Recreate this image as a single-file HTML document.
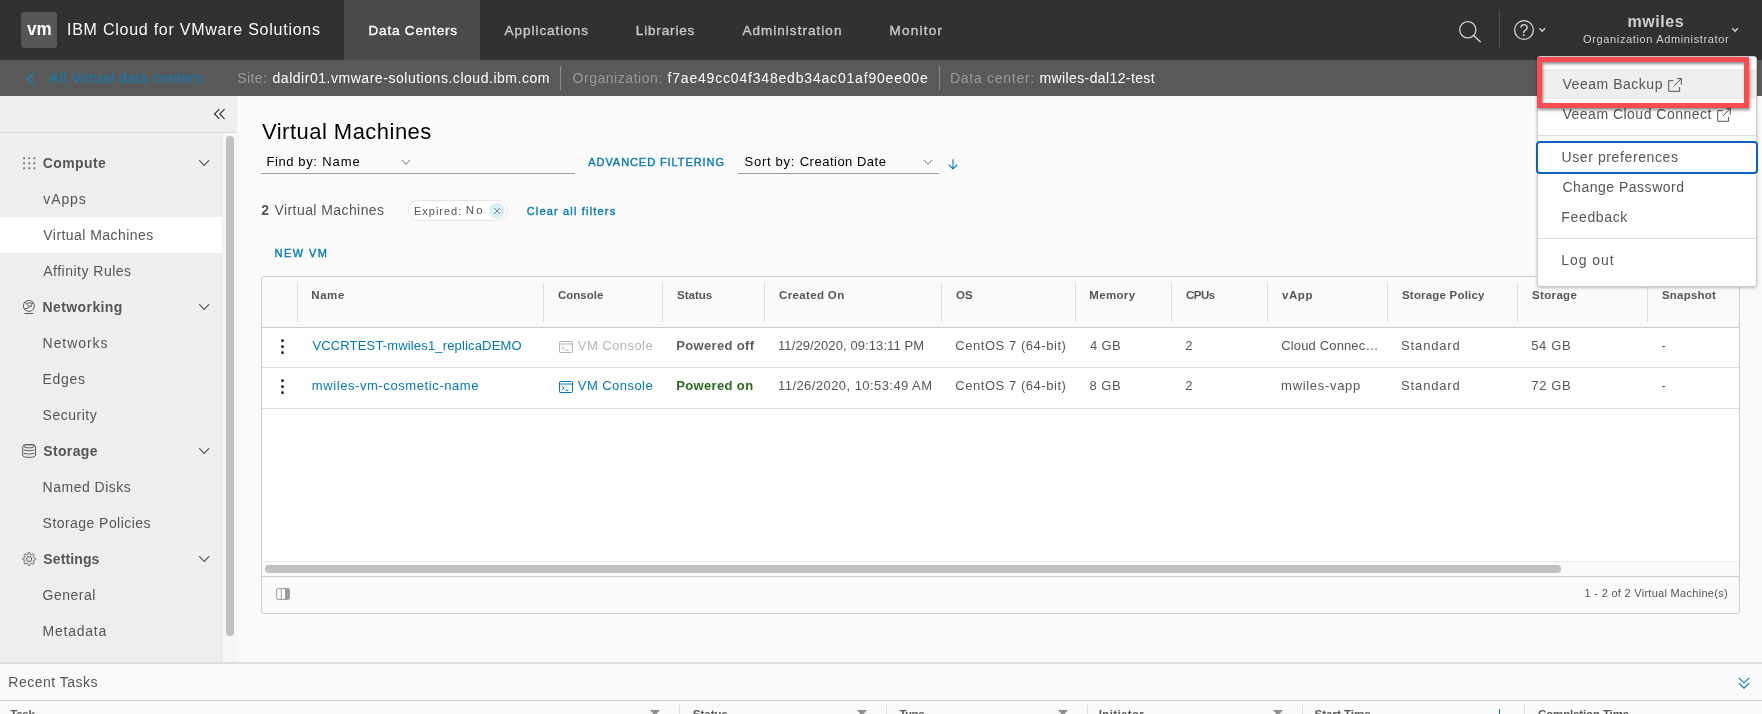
<!DOCTYPE html>
<html lang="en"><head><meta charset="utf-8"><title>IBM Cloud for VMware Solutions - Virtual Machines</title>
<style>
*{box-sizing:border-box;margin:0;padding:0}
html,body{width:1762px;height:714px;overflow:hidden;background:#fafafa;font-family:"Liberation Sans",Arial,sans-serif;}
.abs,.t{position:absolute}
.t{white-space:nowrap;line-height:normal}
.m{-webkit-text-stroke:0.35px currentColor}
svg{position:absolute;overflow:visible}
#hdr{left:0;top:0;width:1762px;height:60px;background:#313131}
#sub{left:0;top:60px;width:1762px;height:36px;background:#595959}
#side{left:0;top:96px;width:223px;height:567px;background:#eeeeee}
#grid{left:261px;top:276px;width:1479px;height:338px;border:1px solid #cccccc;border-radius:3px;background:#fff;overflow:hidden}
#menu{left:1537px;top:56px;width:220px;height:231px;background:#fff;border:1px solid #cccccc;border-radius:3px;box-shadow:0 1px 3px rgba(0,0,0,.25)}
#tasks{left:0;top:662px;width:1762px;height:52px;background:#fafafa;border-top:2px solid #dddddd}
#app{position:absolute;left:0;top:0;width:1762px;height:714px;will-change:transform}
</style></head><body><div id="app">
<div id="hdr" class="abs">
<div class="abs" style="left:21px;top:12px;width:36px;height:36px;border-radius:3px;background:#565656"></div>
<span class="t" id="t0" style="left:26.50px;top:17.91px;font-size:19px;color:#ffffff;font-weight:700;transform:scaleX(0.9);transform-origin:0 0;">vm</span>
<span class="t" id="t1" style="left:67.00px;top:20.52px;font-size:16px;color:#fafafa;letter-spacing:0.752px;">IBM Cloud for VMware Solutions</span>
<div class="abs" style="left:344px;top:0;width:136px;height:60px;background:#4b4b4b"></div>
<span class="t m" id="t2" style="left:368.50px;top:22.68px;font-size:13.5px;color:#ffffff;letter-spacing:0.818px;">Data Centers</span>
<span class="t m" id="t3" style="left:504.50px;top:22.68px;font-size:13.5px;color:#c9c9c9;letter-spacing:0.973px;">Applications</span>
<span class="t m" id="t4" style="left:635.80px;top:22.68px;font-size:13.5px;color:#c9c9c9;letter-spacing:0.850px;">Libraries</span>
<span class="t m" id="t5" style="left:742.40px;top:22.68px;font-size:13.5px;color:#c9c9c9;letter-spacing:1.036px;">Administration</span>
<span class="t m" id="t6" style="left:889.50px;top:22.68px;font-size:13.5px;color:#c9c9c9;letter-spacing:1.228px;">Monitor</span>
<svg style="left:1457px;top:18px" width="26" height="26" viewBox="0 0 26 26"><circle cx="10.800" cy="11.700" r="8.100" fill="none" stroke="#d4d4d4" stroke-width="1.300"/><path d="M16.800 17.700 L23.300 23.700" stroke="#d4d4d4" stroke-width="1.400" stroke-linecap="round"/></svg>
<div class="abs" style="left:1499px;top:10px;width:1px;height:38px;background:#4f4f4f"></div>
<svg style="left:1513px;top:20px" width="36" height="20" viewBox="0 0 36 20"><circle cx="11" cy="10" r="9.400" fill="none" stroke="#d4d4d4" stroke-width="1.300"/><path d="M26.400 8.300 L29.200 11.300 L32 8.300" fill="none" stroke="#d4d4d4" stroke-width="1.300"/></svg>
<span class="t" id="t7" style="left:1519.60px;top:21.52px;font-size:16px;color:#d4d4d4;">?</span>
<span class="t" id="t8" style="left:1627.40px;top:12.52px;font-size:16px;color:#d0d0d0;font-weight:700;letter-spacing:0.580px;">mwiles</span>
<span class="t" id="t9" style="left:1583.00px;top:33.05px;font-size:11px;color:#d0d0d0;letter-spacing:0.644px;">Organization Administrator</span>
<svg style="left:1730px;top:25px" width="10" height="10" viewBox="0 0 10 10"><path d="M2.300 3.300 L5.100 6.300 L7.900 3.300" fill="none" stroke="#d4d4d4" stroke-width="1.300"/></svg>
</div>
<div id="sub" class="abs"></div>
<svg style="left:25.300px;top:71.700px" width="10" height="14" viewBox="0 0 10 14"><path d="M8 1.5 L2.5 7 L8 12.5" fill="none" stroke="#0b86cc" stroke-width="1.6"/></svg>
<span class="t" id="t10" style="left:49.30px;top:70.33px;font-size:14px;color:#0c7cba;letter-spacing:0.562px;">All Virtual data centers</span>
<span class="t" id="t11" style="left:237.14px;top:70.33px;font-size:14px;color:#9a9a9a;letter-spacing:0.464px;">Site:</span>
<span class="t" id="t12" style="left:272.50px;top:70.33px;font-size:14px;color:#ffffff;letter-spacing:0.532px;">daldir01.vmware-solutions.cloud.ibm.com</span>
<div class="abs" style="left:560px;top:66px;width:1px;height:24px;background:#8c8c8c"></div>
<span class="t" id="t13" style="left:572.50px;top:70.33px;font-size:14px;color:#9a9a9a;letter-spacing:0.542px;">Organization:</span>
<span class="t" id="t14" style="left:667.50px;top:70.33px;font-size:14px;color:#ffffff;letter-spacing:0.811px;">f7ae49cc04f348edb34ac01af90ee00e</span>
<div class="abs" style="left:939px;top:66px;width:1px;height:24px;background:#8c8c8c"></div>
<span class="t" id="t15" style="left:950.00px;top:70.33px;font-size:14px;color:#9a9a9a;letter-spacing:0.727px;">Data center:</span>
<span class="t" id="t16" style="left:1039.50px;top:70.33px;font-size:14px;color:#ffffff;letter-spacing:0.389px;">mwiles-dal12-test</span>
<div id="side" class="abs"></div>
<div class="abs" style="left:222px;top:96px;width:15px;height:37px;background:#eeeeee"></div>
<div class="abs" style="left:222.800px;top:133px;width:14.200px;height:530px;background:#f7f7f7"></div>
<div class="abs" style="left:0;top:132px;width:237px;height:1px;background:#d8d8d8"></div>
<div class="abs" style="left:226.200px;top:135.800px;width:7.600px;height:500.600px;border-radius:4px;background:#c1c1c1"></div>
<svg style="left:213px;top:108px" width="14" height="12" viewBox="0 0 14 12"><path d="M6.400 1.100 L1.500 6 L6.400 10.900 M11.600 1.100 L6.700 6 L11.600 10.900" fill="none" stroke="#2e2e2e" stroke-width="1.1"/></svg>
<div class="abs" style="left:0;top:217px;width:222px;height:36px;background:#ffffff"></div>
<span class="t" id="t17" style="left:42.71px;top:155.33px;font-size:14px;color:#565656;font-weight:700;letter-spacing:0.399px;">Compute</span>
<svg style="left:198px;top:159px" width="12" height="8" viewBox="0 0 12 8"><path d="M1.200 1.200 L6.200 6.300 L11.200 1.200" fill="none" stroke="#565656" stroke-width="1.2"/></svg>
<span class="t" id="t18" style="left:43.30px;top:191.33px;font-size:14px;color:#565656;letter-spacing:0.900px;">vApps</span>
<span class="t" id="t19" style="left:43.30px;top:227.33px;font-size:14px;color:#565656;letter-spacing:0.453px;">Virtual Machines</span>
<span class="t" id="t20" style="left:43.30px;top:263.33px;font-size:14px;color:#565656;letter-spacing:0.483px;">Affinity Rules</span>
<span class="t" id="t21" style="left:42.60px;top:299.33px;font-size:14px;color:#565656;font-weight:700;letter-spacing:0.389px;">Networking</span>
<svg style="left:198px;top:303px" width="12" height="8" viewBox="0 0 12 8"><path d="M1.200 1.200 L6.200 6.300 L11.200 1.200" fill="none" stroke="#565656" stroke-width="1.2"/></svg>
<span class="t" id="t22" style="left:42.60px;top:335.33px;font-size:14px;color:#565656;letter-spacing:0.940px;">Networks</span>
<span class="t" id="t23" style="left:42.60px;top:371.33px;font-size:14px;color:#565656;letter-spacing:0.657px;">Edges</span>
<span class="t" id="t24" style="left:42.61px;top:407.33px;font-size:14px;color:#565656;letter-spacing:0.499px;">Security</span>
<span class="t" id="t25" style="left:43.30px;top:443.33px;font-size:14px;color:#565656;font-weight:700;letter-spacing:0.338px;">Storage</span>
<svg style="left:198px;top:447px" width="12" height="8" viewBox="0 0 12 8"><path d="M1.200 1.200 L6.200 6.300 L11.200 1.200" fill="none" stroke="#565656" stroke-width="1.2"/></svg>
<span class="t" id="t26" style="left:42.60px;top:479.33px;font-size:14px;color:#565656;letter-spacing:0.500px;">Named Disks</span>
<span class="t" id="t27" style="left:42.61px;top:515.33px;font-size:14px;color:#565656;letter-spacing:0.446px;">Storage Policies</span>
<span class="t" id="t28" style="left:43.30px;top:551.33px;font-size:14px;color:#565656;font-weight:700;letter-spacing:0.120px;">Settings</span>
<svg style="left:198px;top:555px" width="12" height="8" viewBox="0 0 12 8"><path d="M1.200 1.200 L6.200 6.300 L11.200 1.200" fill="none" stroke="#565656" stroke-width="1.2"/></svg>
<span class="t" id="t29" style="left:42.61px;top:587.33px;font-size:14px;color:#565656;letter-spacing:0.503px;">General</span>
<span class="t" id="t30" style="left:42.60px;top:623.33px;font-size:14px;color:#565656;letter-spacing:0.764px;">Metadata</span>
<svg style="left:22px;top:156px" width="14" height="14" viewBox="0 0 14 14" fill="#7d7d7d"><rect x="1.1" y="1.3" width="2" height="2" rx="0.5"/><rect x="1.1" y="6.3" width="2" height="2" rx="0.5"/><rect x="1.1" y="11.3" width="2" height="2" rx="0.5"/><rect x="6.2" y="1.3" width="2" height="2" rx="0.5"/><rect x="6.2" y="6.3" width="2" height="2" rx="0.5"/><rect x="6.2" y="11.3" width="2" height="2" rx="0.5"/><rect x="11.3" y="1.3" width="2" height="2" rx="0.5"/><rect x="11.3" y="6.3" width="2" height="2" rx="0.5"/><rect x="11.3" y="11.3" width="2" height="2" rx="0.5"/></svg>
<svg style="left:22px;top:299px" width="14" height="16" viewBox="0 0 14 16" fill="none" stroke="#5c5c5c" stroke-width="1"><circle cx="6.900" cy="6.900" r="5.500"/><path d="M3.300 2.800 Q4.800 7.600 9.700 7.400 M11 3.200 Q8.500 9.500 2.300 10 M4.800 4.200 Q8 3.300 10.400 4.400 M2.400 14.500 H11.300"/></svg>
<svg style="left:22px;top:444px" width="14" height="14" viewBox="0 0 14 14" fill="none" stroke="#5c5c5c" stroke-width="1"><ellipse cx="7.100" cy="2.300" rx="5.200" ry="1.600"/><path d="M0.700 3 Q0.700 0.600 3.500 0.600 H10.700 Q13.500 0.600 13.500 3 V11 Q13.500 13.400 7.100 13.400 Q0.700 13.400 0.700 11 Z M1.800 6 Q7.100 7.700 12.400 6 M1.800 9.300 Q7.100 11 12.400 9.300"/></svg>
<svg style="left:22px;top:552px" width="14" height="14" viewBox="0 0 14 14" fill="none" stroke="#5c5c5c" stroke-width="1" stroke-linejoin="round"><circle cx="7.100" cy="7" r="2.500"/><path d="M7.10 0.45 L7.53 0.46 L7.93 0.70 L8.18 1.56 L8.33 2.41 L8.56 2.69 L8.84 2.80 L9.11 2.92 L9.47 2.89 L10.18 2.39 L10.97 1.96 L11.42 2.08 L11.73 2.37 L12.02 2.68 L12.14 3.13 L11.71 3.92 L11.21 4.62 L11.18 4.99 L11.30 5.26 L11.41 5.54 L11.69 5.77 L12.54 5.92 L13.40 6.17 L13.64 6.57 L13.65 7.00 L13.64 7.43 L13.40 7.83 L12.54 8.08 L11.69 8.23 L11.41 8.46 L11.30 8.74 L11.18 9.01 L11.21 9.37 L11.71 10.08 L12.14 10.87 L12.02 11.32 L11.73 11.63 L11.42 11.92 L10.97 12.04 L10.18 11.61 L9.47 11.11 L9.11 11.08 L8.84 11.20 L8.56 11.31 L8.33 11.59 L8.18 12.44 L7.93 13.30 L7.53 13.54 L7.10 13.55 L6.67 13.54 L6.27 13.30 L6.02 12.44 L5.87 11.59 L5.64 11.31 L5.36 11.20 L5.09 11.08 L4.73 11.11 L4.02 11.61 L3.23 12.04 L2.78 11.92 L2.47 11.63 L2.18 11.32 L2.06 10.87 L2.49 10.08 L2.99 9.38 L3.02 9.01 L2.90 8.74 L2.79 8.46 L2.51 8.23 L1.66 8.08 L0.80 7.83 L0.56 7.43 L0.55 7.00 L0.56 6.57 L0.80 6.17 L1.66 5.92 L2.51 5.77 L2.79 5.54 L2.90 5.26 L3.02 4.99 L2.99 4.62 L2.49 3.92 L2.06 3.13 L2.18 2.68 L2.47 2.37 L2.78 2.08 L3.23 1.96 L4.02 2.39 L4.72 2.89 L5.09 2.92 L5.36 2.80 L5.64 2.69 L5.87 2.41 L6.02 1.56 L6.27 0.70 L6.67 0.46 Z"/></svg>
<span class="t" id="t31" style="left:262.00px;top:119.09px;font-size:22px;color:#000000;letter-spacing:0.473px;">Virtual Machines</span>
<span class="t" id="t32" style="left:266.43px;top:154.24px;font-size:13px;color:#000000;letter-spacing:0.610px;">Find by:</span>
<span class="t" id="t33" style="left:322.23px;top:154.24px;font-size:13px;color:#000000;letter-spacing:0.969px;">Name</span>
<svg style="left:400.800px;top:158.600px" width="10" height="7" viewBox="0 0 10 7"><path d="M1 1 L5 5.300 L9 1" fill="none" stroke="#737373" stroke-width="1"/></svg>
<div class="abs" style="left:261px;top:173px;width:314px;height:1px;background:#9a9a9a"></div>
<span class="t m" id="t34" style="left:588.30px;top:156.04px;font-size:11px;color:#0079b8;letter-spacing:0.924px;">ADVANCED FILTERING</span>
<span class="t" id="t35" style="left:744.60px;top:154.24px;font-size:13px;color:#000000;letter-spacing:0.704px;">Sort by:</span>
<span class="t" id="t36" style="left:799.70px;top:154.24px;font-size:13px;color:#000000;letter-spacing:0.503px;">Creation Date</span>
<svg style="left:922.900px;top:158.600px" width="10" height="7" viewBox="0 0 10 7"><path d="M1 1 L5 5.300 L9 1" fill="none" stroke="#737373" stroke-width="1"/></svg>
<div class="abs" style="left:738px;top:173px;width:201px;height:1px;background:#9a9a9a"></div>
<svg style="left:947px;top:158px" width="12" height="13" viewBox="0 0 12 13"><path d="M6 1.200 V10.800 M1.700 6.600 L6 10.900 L10.300 6.600" fill="none" stroke="#0079b8" stroke-width="1.100"/></svg>
<span class="t" id="t37" style="left:261.30px;top:201.83px;font-size:14px;color:#565656;font-weight:700;">2</span>
<span class="t" id="t38" style="left:274.50px;top:201.83px;font-size:14px;color:#565656;letter-spacing:0.422px;">Virtual Machines</span>
<div class="abs" style="left:408px;top:200px;width:99.500px;height:21px;border:1px solid #e4e4e4;border-radius:11px;background:#fff"></div>
<span class="t" id="t39" style="left:413.96px;top:204.94px;font-size:11px;color:#565656;letter-spacing:0.998px;">Expired:</span>
<span class="t" id="t40" style="left:465.73px;top:204.49px;font-size:11.5px;color:#565656;letter-spacing:2.175px;">No</span>
<svg style="left:488.800px;top:203px" width="16" height="16" viewBox="0 0 16 16"><circle cx="8" cy="8" r="7.900" fill="#d9eef7"/><path d="M5 5 L11 11 M11 5 L5 11" stroke="#737373" stroke-width="0.900"/></svg>
<span class="t m" id="t41" style="left:526.70px;top:204.94px;font-size:11px;color:#0079b8;letter-spacing:1.175px;">Clear all filters</span>
<span class="t m" id="t42" style="left:274.60px;top:247.24px;font-size:11px;color:#0079b8;letter-spacing:1.418px;">NEW VM</span>
<div id="grid" class="abs">
<div class="abs" style="left:0;top:0;width:1478px;height:51px;background:#fafafa;border-bottom:1px solid #cccccc"></div>
<div class="abs" style="left:0;top:90px;width:1478px;height:1px;background:#dddddd"></div>
<div class="abs" style="left:0;top:131px;width:1478px;height:1px;background:#dddddd"></div>
<div class="abs" style="left:0;top:284px;width:1478px;height:16px;background:#fafafa;border-top:1px solid #e8e8e8"></div>
<div class="abs" style="left:3.200px;top:288px;width:1296px;height:8px;border-radius:4px;background:#c1c1c1"></div>
<div class="abs" style="left:0;top:299px;width:1478px;height:38px;background:#fafafa;border-top:1px solid #cccccc"></div>
<div class="abs" style="left:35px;top:6px;width:1px;height:39px;background:#dddddd"></div>
<div class="abs" style="left:281px;top:6px;width:1px;height:39px;background:#dddddd"></div>
<div class="abs" style="left:400px;top:6px;width:1px;height:39px;background:#dddddd"></div>
<div class="abs" style="left:502px;top:6px;width:1px;height:39px;background:#dddddd"></div>
<div class="abs" style="left:679px;top:6px;width:1px;height:39px;background:#dddddd"></div>
<div class="abs" style="left:813px;top:6px;width:1px;height:39px;background:#dddddd"></div>
<div class="abs" style="left:909px;top:6px;width:1px;height:39px;background:#dddddd"></div>
<div class="abs" style="left:1005px;top:6px;width:1px;height:39px;background:#dddddd"></div>
<div class="abs" style="left:1125px;top:6px;width:1px;height:39px;background:#dddddd"></div>
<div class="abs" style="left:1255px;top:6px;width:1px;height:39px;background:#dddddd"></div>
<div class="abs" style="left:1385px;top:6px;width:1px;height:39px;background:#dddddd"></div>
</div>
<span class="t" id="t43" style="left:311.24px;top:288.59px;font-size:11.5px;color:#565656;font-weight:700;letter-spacing:0.586px;">Name</span>
<span class="t" id="t44" style="left:558.00px;top:288.59px;font-size:11.5px;color:#565656;font-weight:700;">Console</span>
<span class="t" id="t45" style="left:677.00px;top:288.59px;font-size:11.5px;color:#565656;font-weight:700;">Status</span>
<span class="t" id="t46" style="left:779.00px;top:288.59px;font-size:11.5px;color:#565656;font-weight:700;letter-spacing:0.356px;">Created On</span>
<span class="t" id="t47" style="left:956.00px;top:288.59px;font-size:11.5px;color:#565656;font-weight:700;">OS</span>
<span class="t" id="t48" style="left:1089.24px;top:288.59px;font-size:11.5px;color:#565656;font-weight:700;letter-spacing:0.350px;">Memory</span>
<span class="t" id="t49" style="left:1186.00px;top:288.59px;font-size:11.5px;color:#565656;font-weight:700;letter-spacing:-0.525px;">CPUs</span>
<span class="t" id="t50" style="left:1282.00px;top:288.59px;font-size:11.5px;color:#565656;font-weight:700;letter-spacing:0.586px;">vApp</span>
<span class="t" id="t51" style="left:1402.00px;top:288.59px;font-size:11.5px;color:#565656;font-weight:700;letter-spacing:0.193px;">Storage Policy</span>
<span class="t" id="t52" style="left:1532.00px;top:288.59px;font-size:11.5px;color:#565656;font-weight:700;letter-spacing:0.344px;">Storage</span>
<span class="t" id="t53" style="left:1662.00px;top:288.59px;font-size:11.5px;color:#565656;font-weight:700;letter-spacing:0.194px;">Snapshot</span>
<svg style="left:279.500px;top:339px" width="5" height="16" viewBox="0 0 5 16" fill="#000"><circle cx="2.500" cy="1.700" r="1.350"/><circle cx="2.500" cy="7.700" r="1.350"/><circle cx="2.500" cy="13.700" r="1.350"/></svg>
<span class="t" id="t54" style="left:312.40px;top:338.24px;font-size:13px;color:#0079b8;letter-spacing:0.158px;">VCCRTEST-mwiles1_replicaDEMO</span>
<svg style="left:558.800px;top:341.2px" width="14" height="12" viewBox="0 0 14 12" fill="none" stroke="#b5b5b5" stroke-width="1"><rect x="0.500" y="0.500" width="13" height="11" rx="0.800"/><path d="M0.500 3 H13.500 M2.800 5.300 L5.200 7.200 L2.800 9.100 M6.500 9.300 H9.500"/></svg>
<span class="t" id="t55" style="left:577.80px;top:338.24px;font-size:13px;color:#b5b5b5;letter-spacing:0.446px;">VM Console</span>
<span class="t" id="t56" style="left:676.14px;top:338.24px;font-size:13px;color:#5e5e5e;font-weight:700;letter-spacing:0.359px;">Powered off</span>
<span class="t" id="t57" style="left:778.02px;top:338.24px;font-size:13px;color:#565656;letter-spacing:0.089px;">11/29/2020, 09:13:11 PM</span>
<span class="t" id="t58" style="left:955.32px;top:338.24px;font-size:13px;color:#565656;letter-spacing:0.543px;">CentOS 7 (64-bit)</span>
<span class="t" id="t59" style="left:1090.00px;top:338.24px;font-size:13px;color:#565656;letter-spacing:0.333px;">4 GB</span>
<span class="t" id="t60" style="left:1185.34px;top:338.24px;font-size:13px;color:#565656;">2</span>
<span class="t" id="t61" style="left:1281.32px;top:338.24px;font-size:13px;color:#565656;letter-spacing:0.140px;">Cloud Connec&#8230;</span>
<span class="t" id="t62" style="left:1401.10px;top:338.24px;font-size:13px;color:#565656;letter-spacing:0.843px;">Standard</span>
<span class="t" id="t63" style="left:1531.21px;top:338.24px;font-size:13px;color:#565656;letter-spacing:0.654px;">54 GB</span>
<span class="t" id="t64" style="left:1661.43px;top:338.24px;font-size:13px;color:#565656;">-</span>
<svg style="left:279.500px;top:379px" width="5" height="16" viewBox="0 0 5 16" fill="#000"><circle cx="2.500" cy="1.700" r="1.350"/><circle cx="2.500" cy="7.700" r="1.350"/><circle cx="2.500" cy="13.700" r="1.350"/></svg>
<span class="t" id="t65" style="left:311.80px;top:378.24px;font-size:13px;color:#0079b8;letter-spacing:0.584px;">mwiles-vm-cosmetic-name</span>
<svg style="left:558.800px;top:381.2px" width="14" height="12" viewBox="0 0 14 12" fill="none" stroke="#0079b8" stroke-width="1"><rect x="0.500" y="0.500" width="13" height="11" rx="0.800"/><path d="M0.500 3 H13.500 M2.800 5.300 L5.200 7.200 L2.800 9.100 M6.500 9.300 H9.500"/></svg>
<span class="t" id="t66" style="left:577.80px;top:378.24px;font-size:13px;color:#0079b8;letter-spacing:0.448px;">VM Console</span>
<span class="t" id="t67" style="left:676.14px;top:378.24px;font-size:13px;color:#2a681b;font-weight:700;letter-spacing:0.363px;">Powered on</span>
<span class="t" id="t68" style="left:778.02px;top:378.24px;font-size:13px;color:#565656;letter-spacing:0.441px;">11/26/2020, 10:53:49 AM</span>
<span class="t" id="t69" style="left:955.32px;top:378.24px;font-size:13px;color:#565656;letter-spacing:0.543px;">CentOS 7 (64-bit)</span>
<span class="t" id="t70" style="left:1089.40px;top:378.24px;font-size:13px;color:#565656;letter-spacing:0.533px;">8 GB</span>
<span class="t" id="t71" style="left:1185.34px;top:378.24px;font-size:13px;color:#565656;">2</span>
<span class="t" id="t72" style="left:1281.11px;top:378.24px;font-size:13px;color:#565656;letter-spacing:0.689px;">mwiles-vapp</span>
<span class="t" id="t73" style="left:1401.10px;top:378.24px;font-size:13px;color:#565656;letter-spacing:0.843px;">Standard</span>
<span class="t" id="t74" style="left:1531.34px;top:378.24px;font-size:13px;color:#565656;letter-spacing:0.621px;">72 GB</span>
<span class="t" id="t75" style="left:1661.43px;top:378.24px;font-size:13px;color:#565656;">-</span>
<svg style="left:276px;top:588px" width="14" height="12" viewBox="0 0 14 12"><rect x="0.600" y="0.600" width="12.800" height="10.800" rx="1.500" fill="#fff" stroke="#9a9a9a" stroke-width="1"/><path d="M9.400 0.600 H12 Q13.400 0.600 13.400 2 V10 Q13.400 11.400 12 11.400 H9.400 Z" fill="#9a9a9a"/><path d="M5.300 0.600 V11.400 M9.400 0.600 V11.400" stroke="#9a9a9a" stroke-width="1"/></svg>
<span class="t" id="t76" style="left:1584.60px;top:587.25px;font-size:11px;color:#565656;letter-spacing:0.289px;">1 - 2 of 2 Virtual Machine(s)</span>
<div id="menu" class="abs">
<div class="abs" style="left:0;top:12px;width:218px;height:30px;background:#eeeeee"></div>
<div class="abs" style="left:0;top:78px;width:218px;height:1px;background:#dddddd"></div>
<div class="abs" style="left:0;top:181px;width:218px;height:1px;background:#dddddd"></div>
<div class="abs" style="left:-2px;top:83.500px;width:222px;height:33px;border:2px solid #0f5fc2;border-radius:4px"></div>
</div>
<span class="t" id="t77" style="left:1562.50px;top:76.03px;font-size:14px;color:#565656;letter-spacing:0.527px;">Veeam Backup</span>
<svg style="left:1668px;top:78px" width="14" height="14" viewBox="0 0 14 14" fill="none" stroke="#4f4f4f" stroke-width="1"><path d="M11.600 9 V13.300 H0.700 V2.700 H5.500"/><path d="M6 7.800 L13.300 0.600 M9.300 0.600 H13.300 V6.600"/></svg>
<span class="t" id="t78" style="left:1562.50px;top:106.03px;font-size:14px;color:#565656;letter-spacing:0.488px;">Veeam Cloud Connect</span>
<svg style="left:1717.1px;top:107.9px" width="14" height="14" viewBox="0 0 14 14" fill="none" stroke="#4f4f4f" stroke-width="1"><path d="M11.600 9 V13.300 H0.700 V2.700 H5.500"/><path d="M6 7.800 L13.300 0.600 M9.300 0.600 H13.300 V6.600"/></svg>
<span class="t" id="t79" style="left:1561.44px;top:149.13px;font-size:14px;color:#565656;letter-spacing:0.613px;">User preferences</span>
<span class="t" id="t80" style="left:1562.50px;top:179.23px;font-size:14px;color:#565656;letter-spacing:0.507px;">Change Password</span>
<span class="t" id="t81" style="left:1561.36px;top:209.43px;font-size:14px;color:#565656;letter-spacing:0.634px;">Feedback</span>
<span class="t" id="t82" style="left:1561.36px;top:252.33px;font-size:14px;color:#565656;letter-spacing:0.936px;">Log out</span>
<div class="abs" style="left:1537px;top:57px;width:212px;height:51px;border:5px solid #fb4b50;box-shadow:1px 2px 3px rgba(0,0,0,.45), inset 1px 2px 3px rgba(0,0,0,.45)"></div>
<div id="tasks" class="abs">
<div class="abs" style="left:0;top:36px;width:1762px;height:1px;background:#cccccc"></div>
<div class="abs" style="left:679px;top:41px;width:1px;height:12px;background:#dddddd"></div>
<div class="abs" style="left:886px;top:41px;width:1px;height:12px;background:#dddddd"></div>
<div class="abs" style="left:1087px;top:41px;width:1px;height:12px;background:#dddddd"></div>
<div class="abs" style="left:1302px;top:41px;width:1px;height:12px;background:#dddddd"></div>
<div class="abs" style="left:1524px;top:41px;width:1px;height:12px;background:#dddddd"></div>
<svg style="left:650px;top:46px" width="10" height="8" viewBox="0 0 10 8"><path d="M0 0 H10 L6 4.500 V8 H4 V4.500 Z" fill="#8c8c8c"/></svg>
<svg style="left:857.2px;top:46px" width="10" height="8" viewBox="0 0 10 8"><path d="M0 0 H10 L6 4.500 V8 H4 V4.500 Z" fill="#8c8c8c"/></svg>
<svg style="left:1058.1px;top:46px" width="10" height="8" viewBox="0 0 10 8"><path d="M0 0 H10 L6 4.500 V8 H4 V4.500 Z" fill="#8c8c8c"/></svg>
<svg style="left:1273.3px;top:46px" width="10" height="8" viewBox="0 0 10 8"><path d="M0 0 H10 L6 4.500 V8 H4 V4.500 Z" fill="#8c8c8c"/></svg>
<div class="abs" style="left:1498.500px;top:45px;width:1px;height:8px;background:#0079b8"></div>
<svg style="left:1737px;top:12px" width="14" height="14" viewBox="0 0 14 14"><path d="M1.800 1.800 L7 6.800 L12.200 1.800 M1.800 7.200 L7 12.200 L12.200 7.200" fill="none" stroke="#0079b8" stroke-width="1.100"/></svg>
</div>
<span class="t" id="t83" style="left:8.36px;top:674.33px;font-size:14px;color:#565656;letter-spacing:0.494px;">Recent Tasks</span>
<span class="t" id="t84" style="left:10.20px;top:707.79px;font-size:11.5px;color:#565656;font-weight:700;letter-spacing:-0.212px;">Task</span>
<span class="t" id="t85" style="left:692.80px;top:707.79px;font-size:11.5px;color:#565656;font-weight:700;">Status</span>
<span class="t" id="t86" style="left:899.50px;top:707.79px;font-size:11.5px;color:#565656;font-weight:700;letter-spacing:-0.297px;">Type</span>
<span class="t" id="t87" style="left:1098.80px;top:707.79px;font-size:11.5px;color:#565656;font-weight:700;letter-spacing:0.348px;">Initiator</span>
<span class="t" id="t88" style="left:1314.60px;top:707.79px;font-size:11.5px;color:#565656;font-weight:700;">Start Time</span>
<span class="t" id="t89" style="left:1538.00px;top:707.79px;font-size:11.5px;color:#565656;font-weight:700;letter-spacing:-0.137px;">Completion Time</span></div></body></html>
